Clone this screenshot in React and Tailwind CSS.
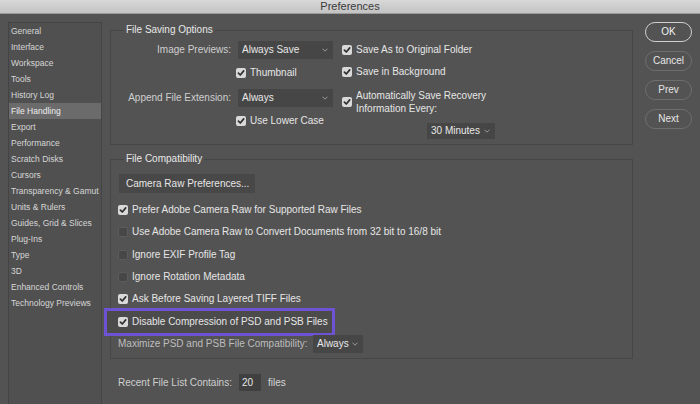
import React from "react";

const sideItems = [
  "General",
  "Interface",
  "Workspace",
  "Tools",
  "History Log",
  "File Handling",
  "Export",
  "Performance",
  "Scratch Disks",
  "Cursors",
  "Transparency & Gamut",
  "Units & Rulers",
  "Guides, Grid & Slices",
  "Plug-Ins",
  "Type",
  "3D",
  "Enhanced Controls",
  "Technology Previews",
];

const Check = ({ checked }) =>
  checked ? (
    <span className="w-[10px] h-[10px] shrink-0 rounded-[2px] bg-[#d9d9d9] flex items-center justify-center">
      <svg width="10" height="10" viewBox="0 0 10 10">
        <path d="M2.4 5.1 L4.3 7 L7.7 2.9" fill="none" stroke="#2f2f2f" strokeWidth="1.7" strokeLinecap="round" strokeLinejoin="round" />
      </svg>
    </span>
  ) : (
    <span className="w-[10px] h-[10px] shrink-0 rounded-[2px] bg-[#474747] border border-[#5c5c5c]" />
  );

const Chevron = () => (
  <svg width="6" height="4" viewBox="0 0 6 4" className="shrink-0">
    <path d="M0.5 0.7 L3 3.2 L5.5 0.7" fill="none" stroke="#9a9a9a" strokeWidth="1" />
  </svg>
);

const Select = ({ value, className = "" }) => (
  <div className={`flex items-center justify-between bg-[#464646] text-[#e8e8e8] pl-[4px] pr-[5px] ${className}`}>
    <span>{value}</span>
    <Chevron />
  </div>
);

const CheckRow = ({ checked = true, children, className = "" }) => (
  <div className={`flex items-center gap-[4px] h-[14px] ${className}`}>
    <Check checked={checked} />
    <span className="text-[#e6e6e6] whitespace-nowrap">{children}</span>
  </div>
);

export default function App() {
  return (
    <div className="w-[700px] h-[404px] overflow-hidden bg-[#535353] font-['Liberation_Sans',Arial,sans-serif] text-[10px] leading-[12px] select-none">
      {/* title bar */}
      <div className="h-[14px] border-b border-[#9c9c9c] bg-gradient-to-b from-[#d8d8d8] to-[#c4c4c4] text-center text-[11px] leading-[13px] text-[#3a3a3a]">
        Preferences
      </div>

      <div className="flex pt-[8px] pl-[8px]">
        {/* sidebar */}
        <div className="w-[94px] h-[400px] shrink-0 border border-[#444444] bg-[#505050]">
          {sideItems.map((item) => (
            <div
              key={item}
              className={`h-[16px] leading-[16px] pl-[2px] text-[8.5px] whitespace-nowrap ${
                item === "File Handling" ? "bg-[#6b6b6b] text-[#eeeeee]" : "text-[#d6d6d6]"
              }`}
            >
              {item}
            </div>
          ))}
        </div>

        {/* main column */}
        <div className="ml-[8px] w-[523px] shrink-0">
          {/* File Saving Options */}
          <fieldset className="mt-[2px] border border-[#464646] pb-[5px]">
            <legend className="ml-[13px] px-[2px] text-[#e8e8e8] leading-[12px]">File Saving Options</legend>
            <div className="flex">
              <div className="flex flex-col mt-[5px]">
                <div className="flex items-center h-[18px]">
                  <span className="w-[120px] text-right text-[#cfcfcf]">Image Previews:</span>
                  <Select value="Always Save" className="ml-[7px] w-[95px] h-[18px]" />
                </div>
                <CheckRow className="mt-[7px] pl-[125px]">Thumbnail</CheckRow>
                <div className="flex items-center h-[18px] mt-[9px]">
                  <span className="w-[120px] text-right text-[#cfcfcf]">Append File Extension:</span>
                  <Select value="Always" className="ml-[7px] w-[95px] h-[18px]" />
                </div>
                <CheckRow className="mt-[7px] pl-[125px]">Use Lower Case</CheckRow>
              </div>

              <div className="flex flex-col ml-[9px] mt-[7px]">
                <CheckRow>Save As to Original Folder</CheckRow>
                <CheckRow className="mt-[8px]">Save in Background</CheckRow>
                <div className="flex items-center gap-[4px] mt-[10px]">
                  <Check checked />
                  <span className="text-[#e6e6e6] leading-[13px]">
                    Automatically Save Recovery
                    <br />
                    Information Every:
                  </span>
                </div>
                <Select value="30 Minutes" className="mt-[8px] ml-[85px] w-[68px] h-[16px]" />
              </div>
            </div>
          </fieldset>

          {/* File Compatibility */}
          <fieldset className="mt-[8px] border border-[#464646] pb-[5px]">
            <legend className="ml-[13px] px-[2px] text-[#e8e8e8] leading-[12px]">File Compatibility</legend>
            <div className="flex flex-col pl-[7px]">
              <div className="mt-[9px] ml-[1px] w-[136px] h-[19px] bg-[#484848] text-[#e6e6e6] pl-[7px] flex items-center">
                Camera Raw Preferences...
              </div>
              <CheckRow className="mt-[10px]">Prefer Adobe Camera Raw for Supported Raw Files</CheckRow>
              <CheckRow checked={false} className="mt-[8px]">
                Use Adobe Camera Raw to Convert Documents from 32 bit to 16/8 bit
              </CheckRow>
              <CheckRow checked={false} className="mt-[9px]">Ignore EXIF Profile Tag</CheckRow>
              <CheckRow checked={false} className="mt-[8px]">Ignore Rotation Metadata</CheckRow>
              <CheckRow className="mt-[8px]">Ask Before Saving Layered TIFF Files</CheckRow>
              <div className="mt-[2px] -ml-[14px] w-[231px] border-[3px] border-[#6e52d4] bg-[#4b4b4b] pl-[11px] py-[4px]">
                <CheckRow>Disable Compression of PSD and PSB Files</CheckRow>
              </div>
              <div className="flex items-center h-[18px] -mt-[1px]">
                <span className="w-[195px] text-[#bdbdbd] whitespace-nowrap">
                  Maximize PSD and PSB File Compatibility:
                </span>
                <Select value="Always" className="w-[50px] h-[18px]" />
              </div>
            </div>
          </fieldset>

          {/* recent files */}
          <div className="flex items-center mt-[15px] pl-[8px] h-[17px]">
            <span className="w-[121px] text-[#cfcfcf] whitespace-nowrap">Recent File List Contains:</span>
            <div className="w-[22px] h-[17px] bg-[#404040] text-[#e8e8e8] pl-[3px] flex items-center">20</div>
            <span className="ml-[7px] text-[#d6d6d6]">files</span>
          </div>
        </div>

        {/* buttons */}
        <div className="ml-[12px] w-[47px] flex flex-col gap-[9px] shrink-0">
          <button className="h-[20px] rounded-full border-[1.5px] border-[#cfcfcf] text-[#f0f0f0] text-[10px]">OK</button>
          <button className="h-[20px] rounded-full border border-[#6e6e6e] text-[#e6e6e6] text-[10px]">Cancel</button>
          <button className="h-[20px] rounded-full border border-[#6e6e6e] text-[#e6e6e6] text-[10px]">Prev</button>
          <button className="h-[20px] rounded-full border border-[#6e6e6e] text-[#e6e6e6] text-[10px]">Next</button>
        </div>
      </div>
    </div>
  );
}
